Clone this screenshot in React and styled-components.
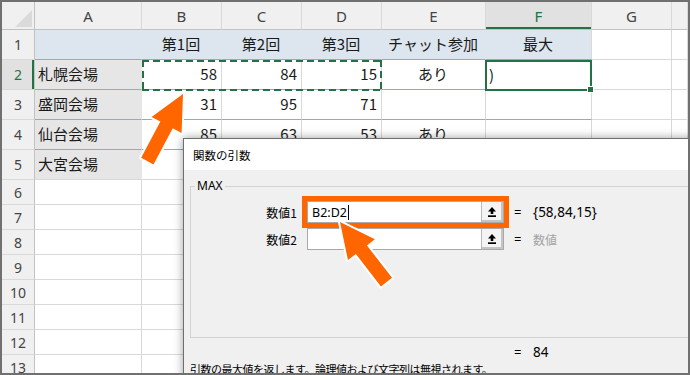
import React from 'react';
import styled, { createGlobalStyle, css } from 'styled-components';

const GlobalStyle = createGlobalStyle`
  html, body {
    margin: 0;
    padding: 0;
    background: #fff;
  }
  body {
    font-family: "Noto Sans CJK JP", "Noto Sans", sans-serif;
  }
`;

const GREEN = '#217346';
const GRID = '#d9d9d9';
const HEAD_LINE = '#c2c2c2';
const BAND = '#8fabc6';
const HEAD_BG = '#dde6ee';
const LABEL_BG = '#e7e6e6';

const Frame = styled.div`
  position: relative;
  width: 690px;
  height: 375px;
  box-sizing: border-box;
  border: 2px solid #707070;
  overflow: hidden;
  background: #fff;
`;

const Sheet = styled.div`
  display: grid;
  grid-template-columns: 33px 107px 80px 80px 80px 104px 106px 80px 1fr;
  grid-template-rows: 28px repeat(5, 30px) repeat(8, 25px);
  font-family: "Noto Sans CJK JP", sans-serif;
  font-size: 15px;
  color: #1a1a1a;
`;

const Corner = styled.div`
  grid-area: 1 / 1;
  box-sizing: border-box;
  background: #f0f0f0;
  border-right: 1px solid ${HEAD_LINE};
  border-bottom: 1px solid ${HEAD_LINE};
  display: flex;
  justify-content: flex-end;
  align-items: flex-end;
  padding: 0 2px 2px 0;
`;

const SelectAll = styled.div`
  width: 17px;
  height: 17px;
  background: #dadada;
  clip-path: polygon(100% 0, 100% 100%, 0 100%);
`;

const ColHead = styled.div`
  grid-area: 1 / ${(p) => p.$c};
  box-sizing: border-box;
  background: #f0f0f0;
  border-right: 1px solid ${GRID};
  border-bottom: 1px solid ${HEAD_LINE};
  display: flex;
  align-items: center;
  justify-content: center;
  font-family: "Noto Sans", sans-serif;
  font-size: 15px;
  color: #444;
  ${(p) =>
    p.$active &&
    css`
      background: #e1e1e1;
      color: ${GREEN};
      box-shadow: inset 0 -2px 0 ${GREEN};
    `}
`;

const RowHead = styled.div`
  grid-area: ${(p) => p.$r} / 1;
  box-sizing: border-box;
  background: #f0f0f0;
  border-right: 1px solid ${HEAD_LINE};
  border-bottom: 1px solid ${GRID};
  display: flex;
  align-items: center;
  justify-content: center;
  font-family: "Noto Sans", sans-serif;
  font-size: 14px;
  color: #444;
  ${(p) =>
    p.$active &&
    css`
      background: #e1e1e1;
      color: ${GREEN};
      box-shadow: inset -2px 0 0 ${GREEN};
    `}
`;

const toneBg = { head: HEAD_BG, label: LABEL_BG, plain: '#fff' };

const Cell = styled.div`
  grid-area: ${(p) => p.$r} / ${(p) => p.$c};
  position: relative;
  box-sizing: border-box;
  background: ${(p) => toneBg[p.$tone]};
  border-right: 1px solid ${(p) => (p.$joined ? toneBg[p.$tone] : GRID)};
  border-bottom: 1px solid ${(p) => (p.$band ? BAND : GRID)};
  display: flex;
  align-items: center;
  justify-content: ${(p) =>
    p.$align === 'right' ? 'flex-end' : p.$align === 'center' ? 'center' : 'flex-start'};
  padding: 0 4px 2px 3px;
  white-space: nowrap;
  ${(p) =>
    p.$active &&
    css`
      z-index: 2;
      margin: 0 0 -1px -1px;
      border: 2px solid ${GREEN};
      padding-left: 2px;
      &::after {
        content: '';
        position: absolute;
        right: -4px;
        bottom: -4px;
        width: 5px;
        height: 5px;
        background: ${GREEN};
        border: 1px solid #fff;
      }
    `}
`;

const Marquee = styled.div`
  grid-area: 3 / 3 / 4 / 6;
  position: relative;
  z-index: 2;
  margin: 0 0 -1px 0;
  pointer-events: none;
  background:
    repeating-linear-gradient(90deg, ${GREEN} 0 7px, transparent 7px 11px) top left / 100% 2px no-repeat,
    repeating-linear-gradient(90deg, ${GREEN} 0 7px, transparent 7px 11px) bottom left / 100% 2px no-repeat,
    repeating-linear-gradient(180deg, ${GREEN} 0 7px, transparent 7px 11px) top left / 2px 100% no-repeat,
    repeating-linear-gradient(180deg, ${GREEN} 0 7px, transparent 7px 11px) top right / 2px 100% no-repeat;
`;

const Dialog = styled.div`
  position: absolute;
  z-index: 5;
  left: 181px;
  top: 136px;
  width: 560px;
  height: 260px;
  background: #f0f0f0;
  border: 1px solid #6e6e6e;
  box-shadow: 0 0 9px rgba(0, 0, 0, 0.38);
  display: flex;
  flex-direction: column;
  font-family: "Noto Sans CJK JP", sans-serif;
  color: #000;
`;

const TitleBar = styled.div`
  height: 31px;
  flex: none;
  background: #fff;
  display: flex;
  align-items: center;
  padding-left: 9px;
  font-size: 11.5px;
`;

const DialogBody = styled.div`
  padding: 9px 0 0 6px;
  display: flex;
  flex-direction: column;
`;

const Group = styled.fieldset`
  margin: 0;
  padding: 8px 0 0 0;
  width: 600px;
  height: 159px;
  box-sizing: border-box;
  border: 1px solid #d3d3d3;
`;

const GroupLabel = styled.legend`
  margin-left: 4px;
  padding: 0 2px;
  font-family: "Noto Sans", sans-serif;
  font-size: 12px;
  line-height: 14px;
`;

const ArgGrid = styled.div`
  display: grid;
  grid-template-columns: 106px 197px 9px auto;
  grid-auto-rows: 22px;
  column-gap: 10px;
  row-gap: 5px;
  align-items: center;
`;

const ArgLabel = styled.div`
  text-align: right;
  font-size: 12px;
`;

const ArgBox = styled.div`
  height: 22px;
  box-sizing: border-box;
  background: #fff;
  border: 1px solid #a9a9a9;
  display: flex;
  align-items: stretch;
  ${(p) =>
    p.$highlight &&
    css`
      outline: 5px solid #ff6600;
    `}
`;

const ArgText = styled.div`
  flex: 1;
  display: flex;
  align-items: center;
  padding-left: 4px;
  font-family: "Noto Sans", sans-serif;
  font-size: 12.5px;
`;

const Caret = styled.span`
  width: 1px;
  height: 15px;
  margin-left: 1px;
  background: #000;
`;

const PickButton = styled.div`
  width: 20px;
  background: #f4f4f4;
  border-left: 1px solid #b9b9b9;
  box-shadow: inset -2px -2px 0 #c4c4c4;
  display: flex;
  align-items: center;
  justify-content: center;
  padding: 0 1px 1px 0;
`;

const Equals = styled.div`
  font-family: "Noto Sans", sans-serif;
  font-size: 13px;
`;

const ArgValue = styled.div`
  font-family: "Noto Sans", "Noto Sans CJK JP", sans-serif;
  font-size: ${(p) => (p.$placeholder ? '12px' : '13.5px')};
  color: ${(p) => (p.$placeholder ? '#a3a3a3' : '#000')};
  ${(p) =>
    p.$placeholder &&
    css`
      font-family: "Noto Sans CJK JP", sans-serif;
    `}
`;

const ResultGrid = styled(ArgGrid)`
  margin-top: 6px;
  padding-left: 1px;
  grid-auto-rows: 16px;
`;

const Description = styled.div`
  margin-top: 1px;
  font-size: 11px;
  line-height: 16px;
  letter-spacing: -0.5px;
  white-space: nowrap;
`;

const ArrowSvg = styled.svg`
  position: absolute;
  z-index: 6;
  left: ${(p) => p.$x - 25}px;
  top: ${(p) => p.$y - 5}px;
  transform-origin: 25px 5px;
  transform: rotate(${(p) => p.$angle}deg);
  overflow: visible;
`;

function Arrow({ x, y, angle }) {
  return (
    <ArrowSvg $x={x} $y={y} $angle={angle} width="50" height="86" viewBox="-25 -5 50 86">
      <path
        d="M0 0 L17 35 L7 35 L7 76 L-7 76 L-7 35 L-17 35 Z"
        fill="#ff6600"
        stroke="#fff"
        strokeWidth="4"
        strokeLinejoin="round"
        paintOrder="stroke"
      />
    </ArrowSvg>
  );
}

function PickIcon() {
  return (
    <svg width="8" height="10" viewBox="0 0 8 10">
      <path d="M4 0 L8 4.5 L5.3 4.5 L5.3 7 L2.7 7 L2.7 4.5 L0 4.5 Z" fill="#000" />
      <rect x="0" y="8.3" width="8" height="1.7" fill="#000" />
    </svg>
  );
}

const COLS = ['A', 'B', 'C', 'D', 'E', 'F', 'G', ''];

const TABLE = [
  ['', '第1回', '第2回', '第3回', 'チャット参加', '最大'],
  ['札幌会場', 58, 84, 15, 'あり', ')'],
  ['盛岡会場', 31, 95, 71, '', ''],
  ['仙台会場', 85, 63, 53, 'あり', ''],
  ['大宮会場', '', '', '', '', ''],
];

const ROW_COUNT = 13;

function cellProps(r, c) {
  const inTable = r <= 5 && c <= 5;
  if (!inTable) return { tone: 'plain', align: 'left', text: '' };
  const text = TABLE[r - 1][c];
  if (r === 1) return { tone: 'head', align: 'center', text, band: true, joined: c < 5 };
  if (c === 0) return { tone: 'label', align: 'left', text, band: r <= 4, joined: true };
  const align = typeof text === 'number' ? 'right' : c === 5 ? 'left' : 'center';
  return { tone: 'plain', align, text, band: r <= 4 };
}

function Spreadsheet() {
  const cells = [];
  for (let r = 1; r <= ROW_COUNT; r++) {
    cells.push(
      <RowHead key={`h${r}`} $r={r + 1} $active={r === 2}>
        {r}
      </RowHead>
    );
    COLS.forEach((_, c) => {
      const p = cellProps(r, c);
      cells.push(
        <Cell
          key={`${r}-${c}`}
          $r={r + 1}
          $c={c + 2}
          $tone={p.tone}
          $align={p.align}
          $band={p.band}
          $joined={p.joined}
          $active={r === 2 && c === 5}
        >
          {p.text}
        </Cell>
      );
    });
  }

  return (
    <Sheet>
      <Corner>
        <SelectAll />
      </Corner>
      {COLS.map((id, i) => (
        <ColHead key={`c${i}`} $c={i + 2} $active={id === 'F'}>
          {id}
        </ColHead>
      ))}
      {cells}
      <Marquee />
    </Sheet>
  );
}

function ArgumentsDialog() {
  return (
    <Dialog>
      <TitleBar>関数の引数</TitleBar>
      <DialogBody>
        <Group>
          <GroupLabel>MAX</GroupLabel>
          <ArgGrid>
            <ArgLabel>数値1</ArgLabel>
            <ArgBox $highlight>
              <ArgText>
                B2:D2
                <Caret />
              </ArgText>
              <PickButton>
                <PickIcon />
              </PickButton>
            </ArgBox>
            <Equals>=</Equals>
            <ArgValue>{'{58,84,15}'}</ArgValue>

            <ArgLabel>数値2</ArgLabel>
            <ArgBox>
              <ArgText />
              <PickButton>
                <PickIcon />
              </PickButton>
            </ArgBox>
            <Equals>=</Equals>
            <ArgValue $placeholder>数値</ArgValue>
          </ArgGrid>
        </Group>
        <ResultGrid>
          <span />
          <span />
          <Equals>=</Equals>
          <ArgValue>84</ArgValue>
        </ResultGrid>
        <Description>引数の最大値を返します。論理値および文字列は無視されます。</Description>
      </DialogBody>
    </Dialog>
  );
}

export default function App() {
  return (
    <>
      <GlobalStyle />
      <Frame>
        <Spreadsheet />
        <ArgumentsDialog />
        <Arrow x={181} y={92} angle={28} />
        <Arrow x={338} y={220} angle={-37.7} />
      </Frame>
    </>
  );
}
